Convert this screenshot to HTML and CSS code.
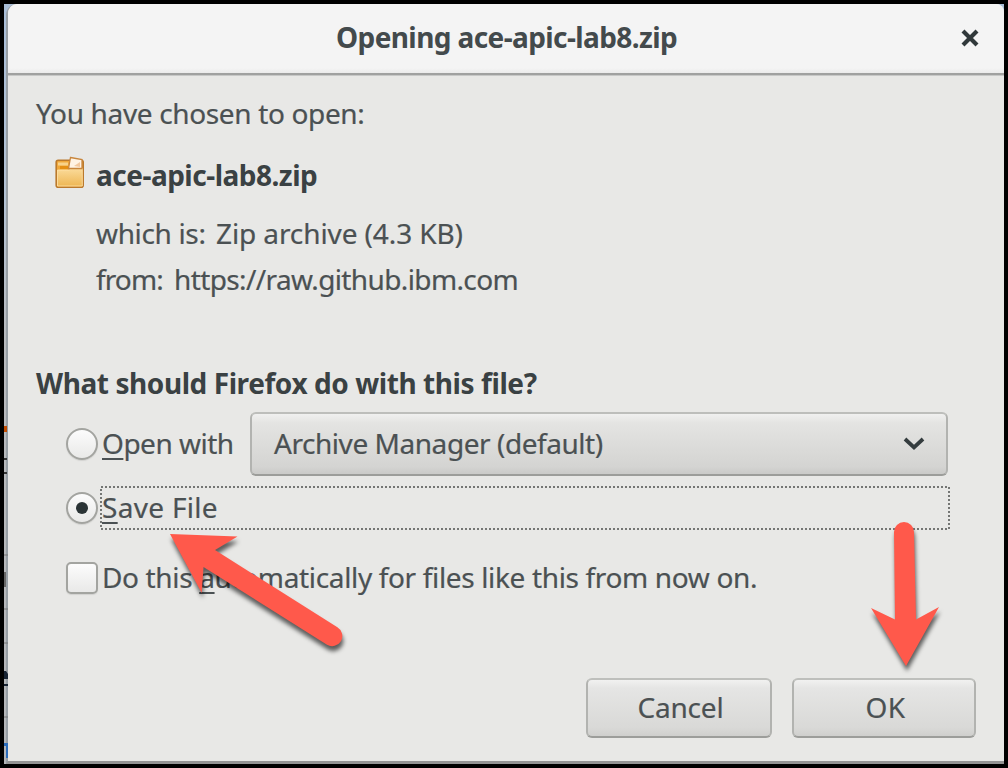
FILE: index.html
```html
<!DOCTYPE html>
<html lang="en">
<head>
<meta charset="utf-8">
<title>Opening ace-apic-lab8.zip</title>
<link rel="stylesheet" href="styles.css">
</head>
<body>
<div class="desktop">
  <main class="dialog">
    <header class="titlebar">
      <h1 class="title">Opening ace-apic-lab8.zip</h1>
      <svg class="close" width="20" height="20" viewBox="0 0 20 20"><path d="M3 3 17 17M17 3 3 17" fill="none" stroke="#30383a" stroke-width="4.2"/></svg>
    </header>
    <section class="content">
      <p class="line intro">You have chosen to open:</p>
      <div class="file">
        <svg class="file-icon" width="30" height="34" viewBox="0 0 30 34">
          <defs><linearGradient id="box" x1="0" y1="0" x2="0" y2="1"><stop offset="0" stop-color="#fbdc9c"/><stop offset="1" stop-color="#eeb755"/></linearGradient></defs>
          <rect x="1.2" y="4.2" width="27" height="27" rx="2" fill="#f0a83a" stroke="#ba792c" stroke-width="1.6"/>
          <path d="M3 6.5h10v3H3z" fill="#f8d28a"/>
          <path d="M5 10h8v3H5z" fill="#e58f13"/>
          <path d="M2.5 14h12l2-2h10.800v18H2.500z" fill="url(#box)" stroke="#ffe5ac" stroke-width=".8"/>
          <path d="M15.500 1.500 27 3.500v9H13.500z" fill="#fff3e4" stroke="#c8863d" stroke-width="1.300"/>
          <path d="m19 10 6-4v5z" fill="#f2c9a0"/>
        </svg>
        <strong class="line filename">ace-apic-lab8.zip</strong>
      </div>
      <div class="meta"><span class="line which">which is:</span><span class="line kind">Zip archive (4.3 KB)</span></div>
      <div class="meta origin"><span class="line from">from:</span><span class="line url">https://raw.github.ibm.com</span></div>
      <h2 class="line question">What should Firefox do with this file?</h2>
      <div class="row open-row">
        <span class="radio"></span>
        <label class="line open"><u>O</u>pen with</label>
        <div class="select">
          <span class="line app">Archive Manager (default)</span>
          <svg width="22" height="14" viewBox="0 0 22 14"><path d="m2 2 9 8.300L20 2" fill="none" stroke="#343c3e" stroke-width="3.800"/></svg>
        </div>
      </div>
      <div class="row save-row">
        <span class="radio checked"></span>
        <label class="line save"><svg class="focus" width="852" height="46"><rect x="2" y="2" width="848" height="42" fill="none" stroke="#747674" stroke-width="2" stroke-dasharray="2 2"/></svg><u>S</u>ave File</label>
      </div>
      <div class="row auto-row">
        <span class="check"></span>
        <label class="line auto">Do this <u>a</u>utomatically for files like this from now on.</label>
      </div>
      <div class="actions">
        <button class="cancel">Cancel</button>
        <button class="ok">OK</button>
      </div>
    </section>
  </main>
  <svg class="backdrop" width="4" height="760">
    <path d="M0 426h3v6H0z" fill="#c14b00"/>
    <path d="M0 459h3M0 473h3" stroke="#333" stroke-width="2"/>
    <path d="M0 555h4M0 609h4M0 643h4M0 717h4" stroke="#777" stroke-width="1"/>
    <path d="M0 572h2v15H0z" fill="#666"/>
    <path d="M0 671h2l2 3v5H0M0 684h4v2H0" fill="#172333"/>
    <path d="M0 743h4v15H2v-12H0z" fill="#2c6dbb"/>
  </svg>
  <svg class="arrows" width="1008" height="768">
    <g class="arrow"><path d="M170 534 237.500 536.500 215 550 337.400 627.300A10 10 0 0 1 327 644.700L203.500 567 201.700 593Z"/></g>
    <g class="arrow"><path d="M894 532A10 10 0 0 1 914 532L916 619.500 939 607 906 666 871 608 895 619.500Z"/></g>
  </svg>
</div>
</body>
</html>
```

FILE: styles.css
```css
* { box-sizing: border-box; }
body { margin: 0; background: #000; font-family: "Noto Sans", sans-serif; font-size: 28px; line-height: 40px; color: #4b5153; -webkit-text-stroke: .2px; }
h1, h2, p { margin: 0; font-size: 28px; }
h1, h2, strong { -webkit-text-stroke: 0; }
.desktop { position: relative; width: 1008px; height: 768px; border: 4px solid #000; overflow: hidden; background: linear-gradient(#a9bed8, #b3c2d3 200px, #b8babd 340px, #b3b5b8); }
.dialog { height: 760px; margin-left: 2px; border-left: 2px solid #989fa5; border-bottom: 3px solid #949494; background: #e8e8e6; border-radius: 11px 8px 0 0; }
.titlebar { display: flex; align-items: flex-start; height: 72px; padding: 13px 24px 0 328px; background: linear-gradient(#f4f4f4 0 64px, #ebebeb 69px, #a0a1a0 69px 71px, #c7c8c7 71px); border-radius: 9px 8px 0 0; }
.title { flex: 1; font-weight: 700; letter-spacing: -.6px; color: #434a4c; white-space: nowrap; }
.close { margin-top: 11px; }
.content { padding: 17px 28px 0; }
.line { display: block; white-space: pre; height: 40px; }
.intro { letter-spacing: -.35px; }
.file { display: flex; align-items: flex-start; margin-top: 21px; padding-left: 19px; gap: 11px; }
.file-icon { margin-top: 2px; }
.filename { padding-top: 1px; letter-spacing: -.5px; color: #3a4143; }
.meta { display: flex; margin: 19px 0 0 60px; }
.origin { margin-top: 6px; }
.which { width: 120px; letter-spacing: -.35px; }
.kind { letter-spacing: -.1px; }
.from { width: 78px; letter-spacing: -.9px; }
.url { letter-spacing: -.62px; }
.question { margin-top: 64px; letter-spacing: -.42px; color: #3a4143; }
.row { display: flex; align-items: center; padding-left: 30px; }
.open-row { height: 64px; margin-top: 9px; }
.radio, .check { flex: none; width: 32px; height: 32px; border: 2px solid #a3a4a0; background: linear-gradient(#fcfcfc, #e9e9e8); box-shadow: 0 1px 1px #d2d2d0; }
.radio { border-radius: 50%; }
.check { border-radius: 5px; }
.checked { display: grid; place-items: center; }
.checked::after { content: ""; width: 12px; height: 12px; border-radius: 50%; background: #2b3436; }
u { text-decoration: underline; text-decoration-thickness: 2px; text-underline-offset: 4px; text-decoration-skip-ink: none; }
.row .line { margin-top: -2px; }
.open { width: 148px; margin-left: 4px; letter-spacing: -.5px; }
.select { display: flex; align-items: center; justify-content: space-between; width: 698px; height: 64px; padding: 0 21px 0 22px; border: 2px solid; border-color: #bdbebb #b2b3b0 #9c9d9a; border-radius: 6px; background: linear-gradient(#f0f0ef, #e4e4e2 15%, #d4d4d2 88%, #cacac8); }
.app { letter-spacing: -.45px; }
.save-row { height: 44px; margin-top: 10px; }
.save { position: relative; margin-left: 4px; letter-spacing: .3px; }
.focus { position: absolute; left: -3px; top: -2px; }
.auto-row { height: 40px; margin-top: 28px; }
.auto { margin-left: 4px; letter-spacing: -.35px; }
.actions { display: flex; justify-content: flex-end; gap: 20px; margin-top: 80px; }
button { height: 60px; padding: 0 0 3px 3px; font: 28px/40px "Noto Sans", sans-serif; color: #4b5153; -webkit-text-stroke: .2px; border: 2px solid; border-color: #bebfbc #b2b3b0 #9c9d9a; border-radius: 6px; background: linear-gradient(#f1f1f0, #e5e5e4 15%, #d9d9d7 85%, #cfcfcd); }
.cancel { width: 186px; letter-spacing: -.2px; }
.ok { width: 184px; letter-spacing: .5px; }
.backdrop { position: absolute; left: 0; top: -4px; }
.arrows { position: absolute; left: -4px; top: -4px; }
.arrow { fill: #ff594b; filter: drop-shadow(1px 5px 2px rgba(0, 0, 0, .6)); }
```
